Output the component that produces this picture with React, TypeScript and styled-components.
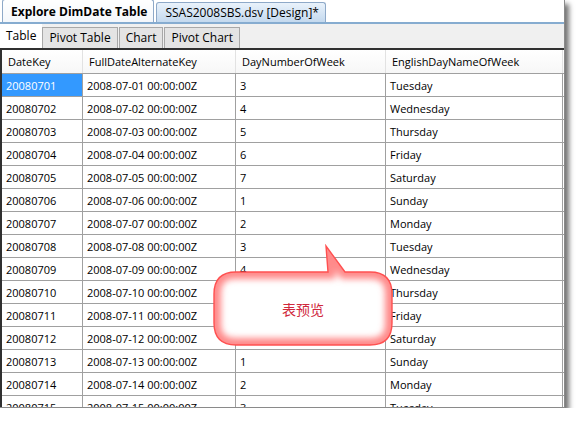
import styled, { createGlobalStyle } from 'styled-components';

const GlobalStyle = createGlobalStyle`
  html, body {
    margin: 0;
    padding: 0;
    background: #ffffff;
  }
  body {
    font-family: "Segoe UI", "Open Sans", "Noto Sans CJK SC", sans-serif;
    font-size: 11px;
    color: #000;
  }
`;

type Row = {
  key: string;
  date: string;
  dayNum: string;
  dayName: string;
};

const DAY_NAMES = ['Sunday', 'Monday', 'Tuesday', 'Wednesday', 'Thursday', 'Friday', 'Saturday'];

// 2008-07-01 is a Tuesday
const ROWS: Row[] = Array.from({ length: 15 }, (_, i) => {
  const d = String(i + 1).padStart(2, '0');
  const idx = (i + 2) % 7;
  return {
    key: `200807${d}`,
    date: `2008-07-${d} 00:00:00Z`,
    dayNum: String(idx + 1),
    dayName: DAY_NAMES[idx],
  };
});

const COLUMNS = [
  { title: 'DateKey', width: 81 },
  { title: 'FullDateAlternateKey', width: 153 },
  { title: 'DayNumberOfWeek', width: 150 },
  { title: 'EnglishDayNameOfWeek', width: 177 },
];

const SUB_TABS = ['Table', 'Pivot Table', 'Chart', 'Pivot Chart'];

const CALLOUT_PATH =
  'M 31 28 L 123 28 L 121 2 L 140 28 L 165 28 Q 187 28 187 50 L 187 79 Q 187 101 165 101 L 31 101 Q 9 101 9 79 L 9 50 Q 9 28 31 28 Z';

const App = () => {
  return (
    <>
      <GlobalStyle />
      <Frame>
        <DocTabs>
          <DocTab active>Explore DimDate Table</DocTab>
          <DocTab>SSAS2008SBS.dsv [Design]*</DocTab>
        </DocTabs>
        <SubTabs>
          {SUB_TABS.map((t, i) => (
            <SubTab key={t} active={i === 0}>
              {t}
            </SubTab>
          ))}
        </SubTabs>
        <Grid>
          <HeaderRow>
            {COLUMNS.map((c) => (
              <HeaderCell key={c.title} w={c.width}>
                {c.title}
              </HeaderCell>
            ))}
          </HeaderRow>
          {ROWS.map((r, i) => (
            <DataRow key={r.key}>
              <Cell w={COLUMNS[0].width} selected={i === 0}>
                {r.key}
              </Cell>
              <Cell w={COLUMNS[1].width}>{r.date}</Cell>
              <Cell w={COLUMNS[2].width}>{r.dayNum}</Cell>
              <Cell w={COLUMNS[3].width}>{r.dayName}</Cell>
            </DataRow>
          ))}
          <Callout>
            <svg width="200" height="110" viewBox="0 0 200 110">
              <defs>
                <clipPath id="calloutClip">
                  <path d={CALLOUT_PATH} />
                </clipPath>
                <filter id="calloutBlur" x="-10%" y="-10%" width="120%" height="120%">
                  <feGaussianBlur stdDeviation="3" />
                </filter>
              </defs>
              <path d={CALLOUT_PATH} fill="#ffffff" />
              <g clipPath="url(#calloutClip)">
                <path
                  d={CALLOUT_PATH}
                  fill="none"
                  stroke="#ff8a8a"
                  strokeWidth="14"
                  filter="url(#calloutBlur)"
                />
              </g>
              <path d={CALLOUT_PATH} fill="none" stroke="#ff5050" strokeWidth="1.4" />
            </svg>
            <CalloutText>表预览</CalloutText>
          </Callout>
        </Grid>
      </Frame>
    </>
  );
};

export default App;

const Frame = styled.div`
  width: 564px;
  height: 407px;
  overflow: hidden;
  border-right: 1px solid #8a8a8a;
  border-bottom: 1px solid #8a8a8a;
  box-shadow: 4px 4px 5px rgba(0, 0, 0, 0.55);
  background: #ffffff;
  display: flex;
  flex-direction: column;
`;

const DocTabs = styled.div`
  height: 24px;
  flex-shrink: 0;
  display: flex;
  align-items: flex-end;
  padding-left: 2px;
  border-bottom: 2px solid #86acd0;
  box-sizing: border-box;
`;

const DocTab = styled.div<{ active?: boolean }>`
  height: ${(p) => (p.active ? '22px' : '19px')};
  padding: 0 6px 0 8px;
  margin-right: 2px;
  display: flex;
  align-items: center;
  font-size: 12px;
  font-weight: ${(p) => (p.active ? 700 : 400)};
  white-space: nowrap;
  border: 1px solid #8ea9c8;
  border-bottom: none;
  border-radius: 3px 3px 0 0;
  background: ${(p) =>
    p.active
      ? 'linear-gradient(#ffffff, #f4f7fb)'
      : 'linear-gradient(#e9f2fb, #c4d9ee)'};
`;

const SubTabs = styled.div`
  height: 24px;
  flex-shrink: 0;
  display: flex;
  align-items: flex-end;
  background: #f0f0f0;
`;

const SubTab = styled.div<{ active?: boolean }>`
  height: ${(p) => (p.active ? '24px' : '21px')};
  box-sizing: border-box;
  padding: 0 6px 1px;
  display: flex;
  align-items: center;
  font-size: 12px;
  white-space: nowrap;
  background: ${(p) => (p.active ? '#ffffff' : '#e4e4e4')};
  border: ${(p) => (p.active ? 'none' : '1px solid #a8a8a8')};
  border-bottom: none;
  margin-right: ${(p) => (p.active ? '0' : '1px')};
`;

const Grid = styled.div`
  position: relative;
  flex: 1;
  border-top: 2px solid #303030;
  border-left: 2px solid #303030;
  overflow: hidden;
`;

const HeaderRow = styled.div`
  display: flex;
  height: 23px;
  background: linear-gradient(#ffffff, #f7f7f7);
  border-bottom: 1px solid #a0a0a0;
`;

const HeaderCell = styled.div<{ w: number }>`
  width: ${(p) => p.w}px;
  flex-shrink: 0;
  box-sizing: border-box;
  padding-left: 6px;
  display: flex;
  align-items: center;
  border-right: 1px solid #e2e2e2;
  white-space: nowrap;
`;

const DataRow = styled.div`
  display: flex;
  height: 23px;
  border-bottom: 1px solid #a0a0a0;
  box-sizing: border-box;
`;

const Cell = styled.div<{ w: number; selected?: boolean }>`
  width: ${(p) => p.w}px;
  flex-shrink: 0;
  box-sizing: border-box;
  padding-left: 4px;
  display: flex;
  align-items: center;
  border-right: 1px solid #a0a0a0;
  white-space: nowrap;
  background: ${(p) => (p.selected ? '#3399ff' : 'transparent')};
  color: ${(p) => (p.selected ? '#ffffff' : '#000000')};
`;

const Callout = styled.div`
  position: absolute;
  left: 203px;
  top: 194px;
  width: 200px;
  height: 110px;
`;

const CalloutText = styled.div`
  position: absolute;
  left: 9px;
  top: 28px;
  width: 178px;
  height: 73px;
  display: flex;
  align-items: center;
  justify-content: center;
  font-family: "Noto Sans CJK SC", sans-serif;
  font-size: 14px;
  color: #d0283c;
`;
